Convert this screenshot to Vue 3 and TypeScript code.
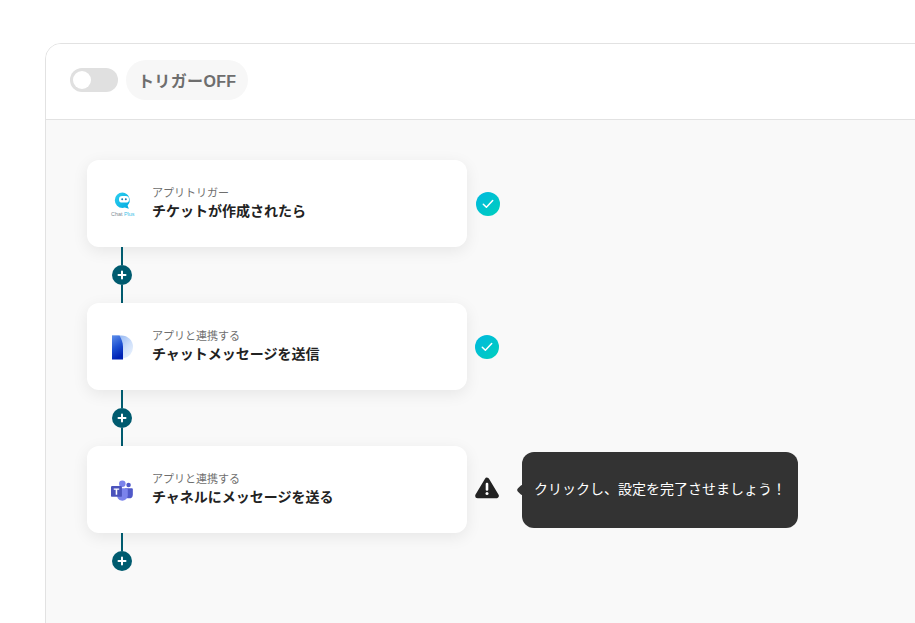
<script setup lang="ts">
interface Step {
  id: number
  label: string
  title: string
  icon: 'chat' | 'doc' | 'teams'
  done: boolean
}

const steps: Step[] = [
  { id: 1, label: 'アプリトリガー', title: 'チケットが作成されたら', icon: 'chat', done: true },
  { id: 2, label: 'アプリと連携する', title: 'チャットメッセージを送信', icon: 'doc', done: true },
  { id: 3, label: 'アプリと連携する', title: 'チャネルにメッセージを送る', icon: 'teams', done: false }
]
</script>

<template>
  <div class="page">
    <section class="panel">
      <header class="head">
        <span class="toggle"><span class="knob"></span></span>
        <span class="trigger">トリガーOFF</span>
      </header>
      <div class="flow">
        <div v-for="(step, i) in steps" :key="step.id" class="step">
          <div class="row">
            <article class="card">
              <div class="logo">
                <svg v-if="step.icon === 'chat'" width="32" height="32" viewBox="0 0 32 32">
                  <defs>
                    <linearGradient id="chatg" x1="0" y1="0" x2="1" y2="1">
                      <stop offset="0" stop-color="#2fd0f0" />
                      <stop offset="1" stop-color="#00a9df" />
                    </linearGradient>
                  </defs>
                  <path d="M16.500 4.500a7.700 7.700 0 1 0 0 15.400c.8 0 1.600-.1 2.300-.3l4 1.200-1.200-3.400a7.700 7.700 0 0 0-5.100-12.900z" fill="url(#chatg)" />
                  <rect x="13" y="8" width="10" height="6.600" rx="3.200" fill="#fff" />
                  <circle cx="16.200" cy="11.300" r="1" fill="#1b7fb0" />
                  <circle cx="19.800" cy="11.300" r="1" fill="#1b7fb0" />
                  <text x="5" y="27.500" class="chat-word">Chat <tspan fill="#3cc0e8">Plus</tspan></text>
                </svg>
                <svg v-else-if="step.icon === 'doc'" width="32" height="32" viewBox="0 0 32 32">
                  <defs>
                    <linearGradient id="docl" x1="0" y1="0" x2="0.3" y2="1">
                      <stop offset="0" stop-color="#5f8fea" />
                      <stop offset="0.55" stop-color="#1c50d2" />
                      <stop offset="1" stop-color="#0022b4" />
                    </linearGradient>
                    <linearGradient id="docr" x1="0" y1="0" x2="1" y2="1">
                      <stop offset="0" stop-color="#7fa8f0" />
                      <stop offset="0.6" stop-color="#cfe0fa" />
                      <stop offset="1" stop-color="#f0f6fe" />
                    </linearGradient>
                  </defs>
                  <path d="M6 4.500h9.500A11.500 11.500 0 0 1 27 16a11.500 11.500 0 0 1-10 11.500L17 28H6z" fill="url(#docr)" />
                  <path d="M6 4.500h7.500c2 3.500 3.500 7 3.500 11.500v12.500H6z" fill="url(#docl)" />
                </svg>
                <svg v-else width="32" height="32" viewBox="0 0 32 32">
                  <g transform="translate(3.440 3.700) scale(0.78)">
                    <circle cx="24.500" cy="9.500" r="2.900" fill="#5059c9" />
                    <path d="M20 13.500h8.500c.8 0 1.500.7 1.500 1.500v6.500a5 5 0 0 1-5 5c-2.500 0-4.500-1.500-5-3.500z" fill="#5059c9" />
                    <circle cx="16.500" cy="7.800" r="4.200" fill="#7b83eb" />
                    <path d="M10 13.500h12c.8 0 1.500.7 1.500 1.500v8a7 7 0 0 1-7 6.500c-3.500 0-6.500-2.500-6.500-6z" fill="#7b83eb" />
                    <rect x="2" y="10.500" width="14" height="14" rx="1.500" fill="#4b53bc" />
                    <path d="M5.500 13.800h7v1.600H10v6.300H8v-6.300H5.500z" fill="#fff" />
                  </g>
                </svg>
              </div>
              <div class="copy">
                <div class="label">{{ step.label }}</div>
                <div class="title">{{ step.title }}</div>
              </div>
            </article>

            <span v-if="step.done" class="check" :class="{ nudge: i === 0 }">
              <svg width="12" height="10" viewBox="0 0 12 10">
                <path d="M1.300 5.200 4.400 8.300 10.700 1.500" fill="none" stroke="#fff" stroke-width="1.500" stroke-linecap="round" stroke-linejoin="round" />
              </svg>
            </span>
            <template v-else>
              <svg class="warn" width="24" height="22" viewBox="0 0 24 22">
                <path d="M12 3.200 21.300 18.800H2.700z" fill="#222" stroke="#222" stroke-width="5" stroke-linejoin="round" />
                <rect x="10.700" y="5.800" width="2.600" height="8" rx="1.100" fill="#fff" />
                <circle cx="12" cy="16.500" r="1.500" fill="#fff" />
              </svg>
              <div class="tip">クリックし、設定を完了させましょう！</div>
            </template>
          </div>

          <div class="link" :class="{ last: i === steps.length - 1 }">
            <span class="line"></span>
            <span class="plus">
              <svg width="10" height="10" viewBox="0 0 10 10">
                <path d="M5 1.500v7M1.500 5h7" stroke="#fff" stroke-width="2" stroke-linecap="round" />
              </svg>
            </span>
            <span class="line tail"></span>
          </div>
        </div>
      </div>
    </section>
  </div>
</template>

<style>
html, body { margin: 0; background: #fff; }
</style>

<style scoped>
.page {
  width: 915px;
  height: 623px;
  box-sizing: border-box;
  padding: 43px 0 0 45px;
  overflow: hidden;
  font-family: "Liberation Sans", "Noto Sans CJK JP", sans-serif;
  background: #fff;
}
.panel {
  width: 900px;
  height: 600px;
  box-sizing: border-box;
  border: 1px solid #e2e2e2;
  border-radius: 16px 0 0 0;
  overflow: hidden;
  display: flex;
  flex-direction: column;
  background: #f9f9f9;
}
.head {
  height: 72px;
  flex: none;
  display: flex;
  align-items: center;
  gap: 8px;
  padding: 0 0 3px 24px;
  background: #fff;
  border-bottom: 1px solid #e2e2e2;
}
.toggle {
  width: 48px;
  height: 24px;
  border-radius: 12px;
  background: #e0e0e0;
  display: flex;
  align-items: center;
  padding-left: 3px;
  box-sizing: border-box;
}
.knob {
  width: 18px;
  height: 18px;
  border-radius: 50%;
  background: #fff;
}
.trigger {
  height: 40px;
  padding: 0 12px;
  border-radius: 20px;
  background: #f7f7f7;
  display: flex;
  align-items: center;
  font-size: 16px;
  font-weight: 700;
  letter-spacing: 0.35px;
  color: #6e6e6e;
}
.flow {
  padding: 40px 0 0 41px;
  display: flex;
  flex-direction: column;
}
.row {
  display: flex;
  align-items: center;
}
.card {
  width: 380px;
  height: 87px;
  flex: none;
  box-sizing: border-box;
  border-radius: 12px;
  background: #fff;
  box-shadow: 0 4px 16px rgba(0, 0, 0, 0.08);
  display: flex;
  align-items: center;
  padding-left: 19px;
  gap: 14px;
}
.logo {
  width: 32px;
  height: 32px;
  flex: none;
  display: flex;
}
.copy {
  display: flex;
  flex-direction: column;
  margin-bottom: 2px;
}
.label {
  font-size: 11px;
  line-height: 16px;
  color: #6e6e6e;
}
.title {
  font-size: 14px;
  line-height: 20px;
  font-weight: 700;
  color: #222;
}
.check {
  width: 24px;
  height: 24px;
  margin-left: 8px;
  border-radius: 50%;
  background: linear-gradient(135deg, #00b8e0, #00d0bc);
  display: flex;
  align-items: center;
  justify-content: center;
  flex: none;
}
.check.nudge { margin-left: 9px; }
.warn {
  margin: 0 0 4px 8px;
  flex: none;
}
.tip {
  position: relative;
  width: 276px;
  height: 76px;
  margin-left: 23px;
  box-sizing: border-box;
  padding: 0 0 4px 12px;
  display: flex;
  align-items: center;
  border-radius: 12px;
  background: #333;
  color: #fff;
  font-size: 14px;
  font-weight: 400;
  white-space: nowrap;
}
.tip::before {
  content: "";
  position: absolute;
  left: -4px;
  top: 34px;
  width: 8px;
  height: 8px;
  background: #333;
  transform: rotate(45deg);
  border-radius: 2px;
}
.link {
  width: 20px;
  margin-left: 25px;
  display: flex;
  flex-direction: column;
  align-items: center;
}
.line {
  width: 2px;
  height: 18px;
  background: #005b6f;
}
.plus {
  width: 20px;
  height: 20px;
  border-radius: 50%;
  background: #005b6f;
  display: flex;
  align-items: center;
  justify-content: center;
}
.link.last .tail { display: none; }
.chat-word {
  font-family: "Liberation Sans", sans-serif;
  font-size: 5.400px;
  font-weight: 400;
  fill: #7c8a92;
}
</style>
